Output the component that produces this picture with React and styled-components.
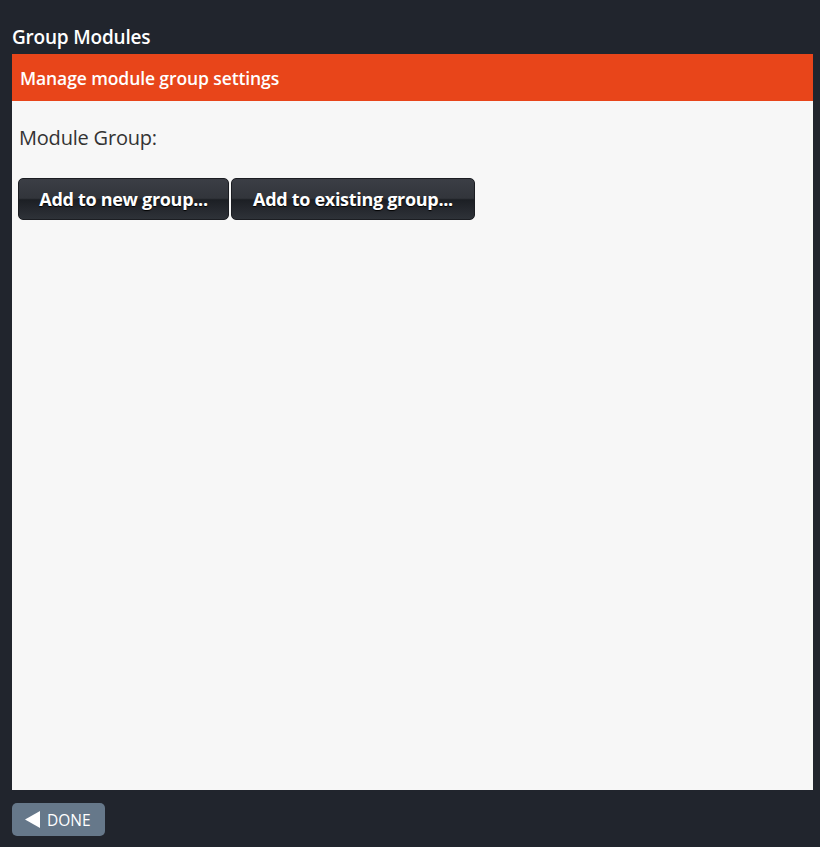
import React from "react";
import styled, { createGlobalStyle } from "styled-components";

const Global = createGlobalStyle`
  html, body { margin: 0; padding: 0; background: #21252d; }
  body { font-family: "Open Sans", "Noto Sans", sans-serif; }
  * { box-sizing: border-box; }
`;

const Page = styled.div`
  width: 820px;
  height: 847px;
  display: flex;
  flex-direction: column;
  padding: 0 7px 0 12px;
  background: #21252d;
`;

const Title = styled.h1`
  margin: 0;
  height: 54px;
  display: flex;
  align-items: flex-end;
  padding-bottom: 4px;
  font-size: 19px;
  font-weight: 600;
  color: #ffffff;
  letter-spacing: -0.2px;
`;

const Panel = styled.section`
  height: 736px;
  background: #f7f7f7;
  display: flex;
  flex-direction: column;
`;

const Banner = styled.div`
  height: 47px;
  background: #e8451a;
  color: #fff;
  font-size: 17.5px;
  font-weight: 600;
  display: flex;
  align-items: center;
  padding-left: 8px;
  letter-spacing: -0.1px;
`;

const Label = styled.div`
  margin: 23px 0 0 7px;
  font-size: 20px;
  color: #333;
  letter-spacing: -0.2px;
`;

const ButtonRow = styled.div`
  display: flex;
  gap: 2px;
  margin: 27px 0 0 6px;
`;

const GroupButton = styled.button`
  height: 42px;
  width: ${(p) => p.$w}px;
  border: 1px solid #1b1d22;
  border-radius: 5px;
  background: linear-gradient(
    to bottom,
    #3b3e45 0%,
    #32353b 48%,
    #1c1f24 52%,
    #25282e 75%,
    #2e3238 100%
  );
  color: #fff;
  font-family: "Open Sans", "Noto Sans", sans-serif;
  font-size: 18px;
  font-weight: 700;
  text-shadow: 0 1px 1px #000;
  cursor: pointer;
  padding: 0;
  letter-spacing: -0.3px;
`;

const Footer = styled.footer`
  flex: 1;
  padding-top: 13px;
`;

const DoneButton = styled.button`
  width: 93px;
  height: 33px;
  border: none;
  border-radius: 5px;
  background: #66788a;
  color: #fff;
  font-family: "Open Sans", "Noto Sans", sans-serif;
  font-size: 15.5px;
  display: flex;
  align-items: center;
  gap: 6px;
  padding: 0 0 0 13px;
  cursor: pointer;
`;

export default function App() {
  return (
    <>
      <Global />
      <Page>
        <Title>Group Modules</Title>
        <Panel>
          <Banner>Manage module group settings</Banner>
          <Label>Module Group:</Label>
          <ButtonRow>
            <GroupButton $w={211}>Add to new group...</GroupButton>
            <GroupButton $w={244}>Add to existing group...</GroupButton>
          </ButtonRow>
        </Panel>
        <Footer>
          <DoneButton>
            <svg width="16" height="17" viewBox="0 0 16 17">
              <polygon points="15,0 15,17 0,8.5" fill="#fff" />
            </svg>
            DONE
          </DoneButton>
        </Footer>
      </Page>
    </>
  );
}
